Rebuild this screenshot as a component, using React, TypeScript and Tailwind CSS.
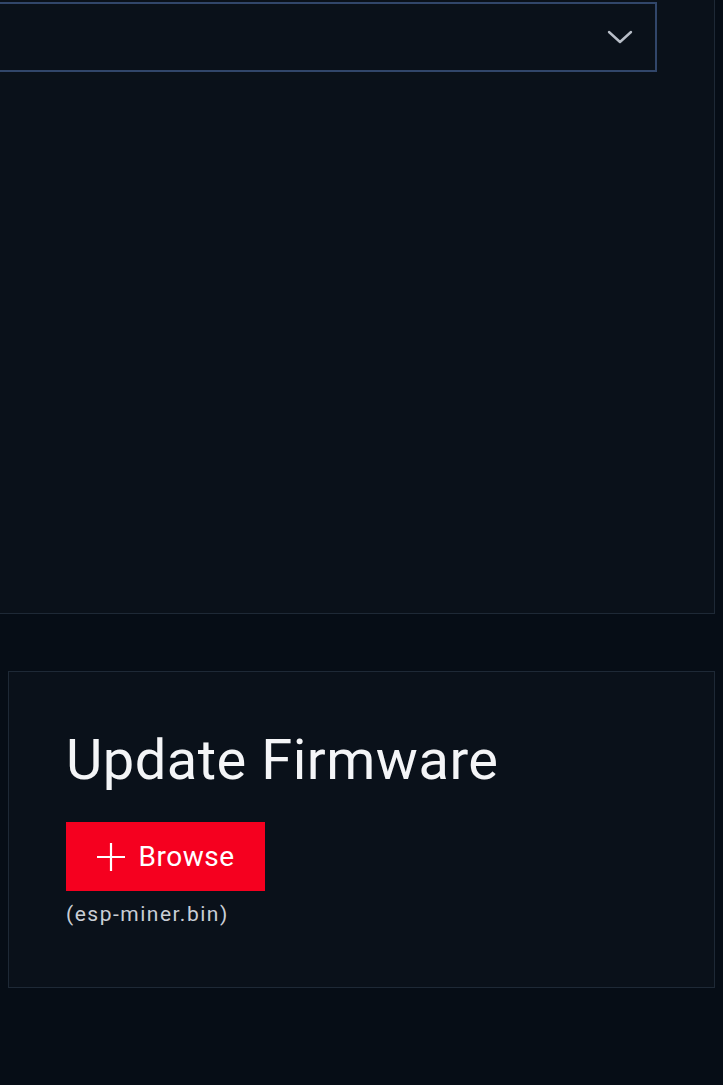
import React from "react";

const Chevron: React.FC = () => (
  <svg width="26" height="14" viewBox="0 0 26 14" fill="none">
    <path d="M2 2l11 10L24 2" stroke="#b8bec8" strokeWidth="2.4" strokeLinecap="round" strokeLinejoin="round" />
  </svg>
);

const PlusIcon: React.FC = () => (
  <svg width="28" height="28" viewBox="0 0 28 28" fill="none">
    <path d="M14 0v28M0 14h28" stroke="#ffffff" strokeWidth="2.2" />
  </svg>
);

const App: React.FC = () => {
  return (
    <div
      className="w-[723px] h-[1085px] overflow-hidden bg-[#060d16] text-white"
      style={{ fontFamily: "Roboto, 'Liberation Sans', sans-serif" }}
    >
      {/* settings card, partly scrolled out of view */}
      <div className="-ml-[20px] -mt-[20px] w-[735px] h-[634px] border border-[#1e2936] bg-[#0a111a] pt-[21px] pr-[57px]">
        <div className="flex h-[70px] items-center justify-end border-2 border-[#31466a] pr-[22px]">
          <Chevron />
        </div>
      </div>

      <div className="ml-[8px] mt-[57px] w-[707px] h-[317px] border border-[#1e2936] bg-[#0a111a] pl-[57px] pt-[60px]">
        <h2 className="text-[56px] leading-none font-normal tracking-[0.5px] text-[#f4f5f7]">Update Firmware</h2>
        <button className="mt-[34px] flex h-[69px] w-[199px] items-center justify-center gap-[14px] bg-[#f5001f] text-[28px] font-normal tracking-[0.5px] text-white">
          <PlusIcon />
          <span>Browse</span>
        </button>
        <div className="mt-[8px] text-[21px] tracking-[1.5px] text-[#c9ced6]">(esp-miner.bin)</div>
      </div>
    </div>
  );
};

export default App;
